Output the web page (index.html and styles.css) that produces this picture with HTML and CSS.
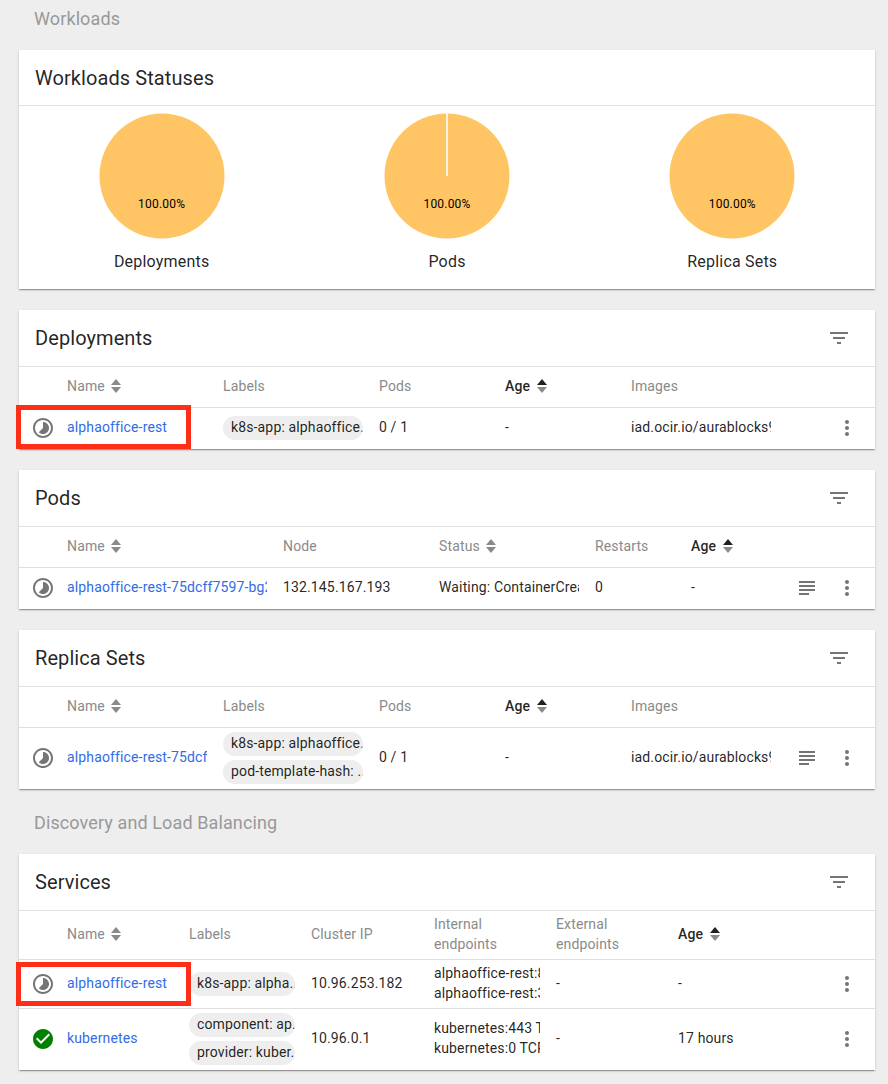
FILE: index.html
```html
<!DOCTYPE html>
<html lang="en">
<head>
  <meta charset="UTF-8" />
  <title>Workloads</title>
  <link rel="stylesheet" href="styles.css">
</head>
<body>
  <svg class="sprite" width="0" height="0">
    <symbol id="pending" viewBox="0 0 24 24"><path d="M16.24 7.76C15.07 6.59 13.54 6 12 6v6l-4.24 4.24c2.34 2.34 6.14 2.34 8.49 0 2.34-2.34 2.34-6.14-.01-8.48zM12 2C6.48 2 2 6.48 2 12s4.48 10 10 10 10-4.48 10-10S17.52 2 12 2zm0 18c-4.42 0-8-3.58-8-8s3.58-8 8-8 8 3.58 8 8-3.58 8-8 8z"/></symbol>
    <symbol id="success" viewBox="0 0 24 24"><path d="M12 2C6.48 2 2 6.48 2 12s4.48 10 10 10 10-4.48 10-10S17.52 2 12 2zm-2 15l-5-5 1.41-1.41L10 14.17l7.59-7.59L19 8l-9 9z"/></symbol>
    <symbol id="filter" viewBox="0 0 24 24"><path d="M10 18h4v-2h-4v2zM3 6v2h18V6H3zm3 7h12v-2H6v2z"/></symbol>
    <symbol id="dots" viewBox="0 0 24 24"><path d="M12 8c1.1 0 2-.9 2-2s-.9-2-2-2-2 .9-2 2 .9 2 2 2zm0 2c-1.1 0-2 .9-2 2s.9 2 2 2 2-.9 2-2-.9-2-2-2zm0 6c-1.1 0-2 .9-2 2s.9 2 2 2 2-.9 2-2-.9-2-2-2z"/></symbol>
    <symbol id="logs" viewBox="0 0 24 24"><path d="M4 5h16v2H4zM4 9h16v2H4zM4 13h16v2H4zM4 17h10v2H4z"/></symbol>
    <symbol id="sort" viewBox="0 0 10 14"><path class="up" d="M0 6L5 0l5 6z"/><path class="down" d="M0 8h10l-5 6z"/></symbol>
  </svg>

  <main class="page">
    <h2 class="section-title">Workloads</h2>

    <section class="card">
      <header class="card-head"><h3>Workloads Statuses</h3></header>
      <div class="charts">
        <figure class="chart">
          <div class="pie"><svg width="126" height="126"><circle cx="63" cy="63" r="62.5"/></svg><span class="pie-value">100.00%</span></div>
          <figcaption>Deployments</figcaption>
        </figure>
        <figure class="chart">
          <div class="pie"><svg width="126" height="126"><circle cx="63" cy="63" r="62.5"/><path class="gap" d="M63 0v63"/></svg><span class="pie-value">100.00%</span></div>
          <figcaption>Pods</figcaption>
        </figure>
        <figure class="chart">
          <div class="pie"><svg width="126" height="126"><circle cx="63" cy="63" r="62.5"/></svg><span class="pie-value">100.00%</span></div>
          <figcaption>Replica Sets</figcaption>
        </figure>
      </div>
    </section>

    <section class="card">
      <header class="card-head"><h3>Deployments</h3><svg class="icon filter"><use href="#filter"/></svg></header>
      <div class="row head cols-deploy">
        <span></span>
        <span class="cell">Name <svg class="sort"><use href="#sort"/></svg></span>
        <span class="cell">Labels</span>
        <span class="cell">Pods</span>
        <span class="cell active">Age <svg class="sort"><use href="#sort"/></svg></span>
        <span class="cell">Images</span>
      </div>
      <div class="row cols-deploy">
        <svg class="icon status"><use href="#pending"/></svg>
        <a class="cell link">alphaoffice-rest</a>
        <div class="cell chips"><span class="chip">k8s-app: alphaoffice...</span></div>
        <span class="cell">0 / 1</span>
        <span class="cell">-</span>
        <span class="cell">iad.ocir.io/aurablocks9/alphaoffice</span>
        <div class="actions"><svg class="icon"><use href="#dots"/></svg></div>
        <div class="callout"></div>
      </div>
    </section>

    <section class="card">
      <header class="card-head"><h3>Pods</h3><svg class="icon filter"><use href="#filter"/></svg></header>
      <div class="row head cols-pods">
        <span></span>
        <span class="cell">Name <svg class="sort"><use href="#sort"/></svg></span>
        <span class="cell">Node</span>
        <span class="cell">Status <svg class="sort"><use href="#sort"/></svg></span>
        <span class="cell">Restarts</span>
        <span class="cell active">Age <svg class="sort"><use href="#sort"/></svg></span>
      </div>
      <div class="row cols-pods">
        <svg class="icon status"><use href="#pending"/></svg>
        <a class="cell link">alphaoffice-rest-75dcff7597-bg2xk</a>
        <span class="cell">132.145.167.193</span>
        <span class="cell">Waiting: ContainerCreating</span>
        <span class="cell">0</span>
        <span class="cell">-</span>
        <div class="actions"><svg class="icon"><use href="#logs"/></svg><svg class="icon"><use href="#dots"/></svg></div>
      </div>
    </section>

    <section class="card">
      <header class="card-head"><h3>Replica Sets</h3><svg class="icon filter"><use href="#filter"/></svg></header>
      <div class="row head cols-deploy">
        <span></span>
        <span class="cell">Name <svg class="sort"><use href="#sort"/></svg></span>
        <span class="cell">Labels</span>
        <span class="cell">Pods</span>
        <span class="cell active">Age <svg class="sort"><use href="#sort"/></svg></span>
        <span class="cell">Images</span>
      </div>
      <div class="row cols-deploy">
        <svg class="icon status"><use href="#pending"/></svg>
        <a class="cell link">alphaoffice-rest-75dcf</a>
        <div class="cell chips">
          <span class="chip">k8s-app: alphaoffice...</span>
          <span class="chip">pod-template-hash: ...</span>
        </div>
        <span class="cell">0 / 1</span>
        <span class="cell">-</span>
        <span class="cell">iad.ocir.io/aurablocks9/alphaoffice</span>
        <div class="actions"><svg class="icon"><use href="#logs"/></svg><svg class="icon"><use href="#dots"/></svg></div>
      </div>
    </section>

    <h2 class="section-title">Discovery and Load Balancing</h2>

    <section class="card">
      <header class="card-head"><h3>Services</h3><svg class="icon filter"><use href="#filter"/></svg></header>
      <div class="row head tall cols-services">
        <span></span>
        <span class="cell">Name <svg class="sort"><use href="#sort"/></svg></span>
        <span class="cell">Labels</span>
        <span class="cell">Cluster IP</span>
        <span class="cell wrap">Internal endpoints</span>
        <span class="cell wrap">External endpoints</span>
        <span class="cell active">Age <svg class="sort"><use href="#sort"/></svg></span>
      </div>
      <div class="row tall cols-services">
        <svg class="icon status"><use href="#pending"/></svg>
        <a class="cell link">alphaoffice-rest</a>
        <div class="cell chips one"><span class="chip">k8s-app: alpha...</span></div>
        <span class="cell">10.96.253.182</span>
        <div class="cell lines"><span>alphaoffice-rest:80 TCP</span><span>alphaoffice-rest:31000 TCP</span></div>
        <span class="cell">-</span>
        <span class="cell">-</span>
        <div class="actions"><svg class="icon"><use href="#dots"/></svg></div>
        <div class="callout"></div>
      </div>
      <div class="row cols-services">
        <svg class="icon status ok"><use href="#success"/></svg>
        <a class="cell link">kubernetes</a>
        <div class="cell chips">
          <span class="chip">component: ap...</span>
          <span class="chip">provider: kuber...</span>
        </div>
        <span class="cell">10.96.0.1</span>
        <div class="cell lines"><span>kubernetes:443 TCP</span><span>kubernetes:0 TCP</span></div>
        <span class="cell">-</span>
        <span class="cell">17 hours</span>
        <div class="actions"><svg class="icon"><use href="#dots"/></svg></div>
      </div>
    </section>
  </main>
</body>
</html>
```

FILE: styles.css
```css
body { margin: 0; background: #eee; font-family: Roboto, "Liberation Sans", sans-serif; font-size: 14px; letter-spacing: .14px; color: rgba(0, 0, 0, .87); }
.sprite { position: absolute; }
.page { padding: 0 13px 14px 19px; }
.section-title { margin: 0; padding: 8px 0 0 15px; height: 50px; box-sizing: border-box; font-size: 18px; font-weight: 400; line-height: 22px; letter-spacing: .11px; color: #999; }
.card + .section-title { padding-top: 2px; height: 44px; }
.card { background: #fff; margin-bottom: 21px; box-shadow: 0 2px 1px -1px rgba(0, 0, 0, .2), 0 1px 1px rgba(0, 0, 0, .14), 0 1px 3px rgba(0, 0, 0, .12); }
.card:last-child { margin-bottom: 0; }

.card-head { display: flex; align-items: center; justify-content: space-between; height: 56px; padding: 0 16px; border-bottom: 1px solid #e0e0e0; }
.card-head h3 { margin: 0; font-size: 20px; font-weight: 400; letter-spacing: .08px; }
.card:first-of-type .card-head { height: 55px; }
.icon { width: 24px; height: 24px; fill: #757575; flex: none; }
.filter { margin-right: 8px; }

.charts { display: grid; grid-template-columns: repeat(3, 1fr); height: 183px; }
.chart { margin: 0; padding-top: 7px; display: flex; flex-direction: column; align-items: center; letter-spacing: .2px; }
.pie { position: relative; height: 126px; }
.pie svg { display: block; }
.pie circle { fill: #ffc564; }
.pie .gap { stroke: #fff3dc; stroke-width: 2; }
.pie-value { position: absolute; left: 0; right: 0; top: 84px; text-align: center; font-size: 12px; line-height: 14px; color: #000; }
.chart figcaption { margin-top: 13px; font-size: 16px; line-height: 19px; }

.row { position: relative; display: grid; align-items: center; min-height: 41px; border-top: 1px solid #e0e0e0; }
.card-head + .row { border-top: 0; }
.row.head { min-height: 40px; color: #8a8a8a; }
.row.tall { min-height: 48px; }
.row .status { margin-left: 12px; margin-top: -1px; }
.cols-deploy { grid-template-columns: 48px 156px 156px 126px 126px 156px 1fr; }
.cols-pods { grid-template-columns: 48px 216px 156px 156px 96px 96px 1fr; }
.cols-services { grid-template-columns: 48px 122px 122px 123px 122px 122px 96px 1fr; }

.cell { margin-right: 16px; padding-bottom: 3px; overflow: hidden; white-space: nowrap; line-height: 20px; }
.cell.wrap { white-space: normal; padding-bottom: 2px; }
.cell.active { color: rgba(0, 0, 0, .87); font-weight: 500; }
.link { color: #326ce5; }
.ok { fill: #008000; }

.sort { --up: #8a8a8a; width: 10px; height: 14px; margin-left: 3px; vertical-align: -2px; fill: #8a8a8a; }
.up { fill: var(--up); }
.cell.active .sort { --up: #212121; }

.chips { display: flex; flex-direction: column; gap: 4px; padding: 4px 0 5px; }
.chips.one { padding: 0; }
.chip { display: block; height: 24px; line-height: 23px; padding-left: 8px; background: #eee; border-radius: 12px; overflow: hidden; white-space: nowrap; }

.lines span { display: block; overflow: hidden; }
.actions { grid-column: -2 / -1; grid-row: 1; display: flex; justify-content: flex-end; gap: 16px; padding-right: 16px; margin-top: -1px; }

.callout { position: absolute; left: -3px; top: -3px; width: 175px; height: 44px; box-sizing: border-box; border: 5px solid #ff2f17; }
.row.tall .callout { top: 2px; }
```
